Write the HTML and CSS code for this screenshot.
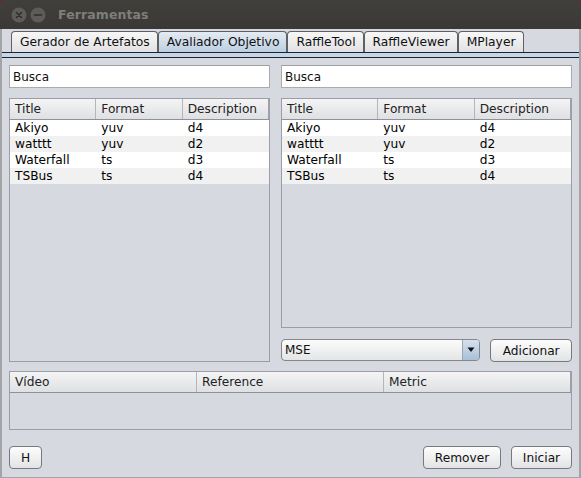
FILE: index.html
```html
<!DOCTYPE html>
<html>
<head>
<meta charset="utf-8">
<link rel="stylesheet" href="styles.css">
</head>
<body>
<div class="window">
  <div class="titlebar">
    <div class="wbtn">
      <svg width="16" height="16" viewBox="0 0 16 16"><circle cx="8" cy="8" r="7.5" fill="#5d5c58"/><path d="M5.5 5.5 L10.5 10.5 M10.5 5.5 L5.5 10.5" stroke="#2f2e2b" stroke-width="1.6" stroke-linecap="round"/></svg>
    </div>
    <div class="wbtn">
      <svg width="16" height="16" viewBox="0 0 16 16"><circle cx="8" cy="8" r="7.5" fill="#5d5c58"/><path d="M4.5 8 L11.5 8" stroke="#2f2e2b" stroke-width="1.6" stroke-linecap="round"/></svg>
    </div>
    <span class="title">Ferramentas</span>
  </div>
  <div class="body">
    <div class="tabs">
      <div class="tab">Gerador de Artefatos</div>
      <div class="tab active">Avaliador Objetivo</div>
      <div class="tab">RaffleTool</div>
      <div class="tab">RaffleViewer</div>
      <div class="tab">MPlayer</div>
    </div>
    <div class="tabline"></div>
    <div class="panel">
      <div class="top">
        <div class="col col-left">
          <div class="field">Busca</div>
          <div class="table grow">
            <div class="thead"><div class="th">Title</div><div class="th">Format</div><div class="th last">Description</div></div>
            <div class="tr"><div class="td">Akiyo</div><div class="td">yuv</div><div class="td">d4</div></div>
            <div class="tr alt"><div class="td">watttt</div><div class="td">yuv</div><div class="td">d2</div></div>
            <div class="tr"><div class="td">Waterfall</div><div class="td">ts</div><div class="td">d3</div></div>
            <div class="tr alt"><div class="td">TSBus</div><div class="td">ts</div><div class="td">d4</div></div>
          </div>
        </div>
        <div class="col col-right">
          <div class="field">Busca</div>
          <div class="table grow">
            <div class="thead"><div class="th">Title</div><div class="th">Format</div><div class="th last">Description</div></div>
            <div class="tr"><div class="td">Akiyo</div><div class="td">yuv</div><div class="td">d4</div></div>
            <div class="tr alt"><div class="td">watttt</div><div class="td">yuv</div><div class="td">d2</div></div>
            <div class="tr"><div class="td">Waterfall</div><div class="td">ts</div><div class="td">d3</div></div>
            <div class="tr alt"><div class="td">TSBus</div><div class="td">ts</div><div class="td">d4</div></div>
          </div>
          <div class="controls">
            <div class="combo">
              <span class="combo-text">MSE</span>
              <span class="combo-arrow"><svg width="8" height="6" viewBox="0 0 8 6"><path d="M0.5 0.5 L7.5 0.5 L4 5 Z" fill="#111"/></svg></span>
            </div>
            <div class="btn btn-add">Adicionar</div>
          </div>
        </div>
      </div>
      <div class="table bottom">
        <div class="thead"><div class="th">Vídeo</div><div class="th">Reference</div><div class="th last">Metric</div></div>
      </div>
      <div class="actions">
        <div class="btn btn-h">H</div>
        <div class="spacer"></div>
        <div class="btn btn-rem">Remover</div>
        <div class="btn btn-ini">Iniciar</div>
      </div>
    </div>
  </div>
</div>
</body>
</html>
```

FILE: styles.css
```css
html, body {
  margin: 0;
  padding: 0;
  background: #5e2750;
}
body {
  font-family: "DejaVu Sans", "Liberation Sans", sans-serif;
  font-size: 12px;
  color: #111;
}
.window {
  width: 581px;
  height: 478px;
  display: flex;
  flex-direction: column;
  overflow: hidden;
  border-radius: 5px 5px 0 0;
}
.titlebar {
  height: 29px;
  flex: none;
  background: linear-gradient(#403f3b, #3a3935);
  display: flex;
  align-items: center;
  padding-left: 11px;
  box-sizing: border-box;
}
.wbtn {
  width: 16px;
  height: 16px;
  margin-right: 3px;
  display: flex;
}
.title {
  margin-left: 9px;
  font-weight: bold;
  font-size: 12.5px;
  color: #7f7e79;
  letter-spacing: 0.1px;
}
.body {
  flex: 1;
  display: flex;
  flex-direction: column;
  background: #d6d9df;
  border-left: 2px solid #a2a4a8;
  border-right: 2px solid #a2a4a8;
  border-bottom: 1px solid #a2a4a8;
}
.tabs {
  display: flex;
  height: 21px;
  margin-top: 2px;
  padding-left: 9px;
}
.tab {
  height: 21px;
  box-sizing: border-box;
  padding: 0 7px 0 8px;
  display: flex;
  align-items: center;
  border: 1px solid #5f6064;
  border-bottom: none;
  border-radius: 4px 4px 0 0;
  background: linear-gradient(#f7f7f7, #e2e2e4);
  color: #111;
  font-size: 12.3px;
}
.tab.active {
  background: linear-gradient(#e4ebf2, #bccfe1);
}
.tabline {
  height: 4px;
  flex: none;
  background: #c5d6e7;
  border-top: 1px solid #1f2330;
  border-bottom: 1px solid #1f2330;
}
.panel {
  flex: 1;
  display: flex;
  flex-direction: column;
  padding: 7px 7px 8px 7px;
}
.top {
  flex: 1;
  display: flex;
  gap: 11px;
}
.col {
  display: flex;
  flex-direction: column;
}
.col-left { width: 261px; }
.col-right { width: 291px; }
.field {
  height: 23px;
  box-sizing: border-box;
  background: #fff;
  border: 1px solid #a9abaf;
  border-top-color: #9c9ea2;
  padding-left: 3px;
  display: flex;
  align-items: center;
  flex: none;
  margin-bottom: 10px;
}
.table {
  border: 1px solid #9b9ea5;
  box-sizing: border-box;
  background: #d6d9df;
}
.grow { flex: 1; }
.thead {
  display: grid;
  grid-template-columns: 1fr 1fr 1fr;
  height: 21px;
  box-sizing: border-box;
  background: linear-gradient(#f4f4f5, #dfe0e3);
  border-bottom: 1px solid #8e9197;
}
.th {
  display: flex;
  align-items: center;
  padding-left: 5px;
  border-right: 1px solid #b3b5ba;
  color: #222;
  font-size: 12.2px;
}
.th.last {
  border-right: 1px solid #9fa1a6;
}
.tr {
  display: grid;
  grid-template-columns: 1fr 1fr 1fr;
  height: 16px;
  background: #fff;
}
.tr.alt { background: #f1f1f2; }
.td {
  padding-left: 5px;
  display: flex;
  align-items: center;
  color: #000;
  font-size: 12.2px;
}
.controls {
  margin-top: 11px;
  height: 23px;
  display: flex;
  gap: 10px;
  flex: none;
}
.combo {
  width: 200px;
  height: 22px;
  box-sizing: border-box;
  border: 1px solid #85878b;
  border-radius: 4px;
  display: flex;
  overflow: hidden;
  background: linear-gradient(#fbfbfb, #e4e5e7);
}
.combo-text {
  flex: 1;
  padding-left: 3px;
  display: flex;
  align-items: center;
}
.combo-arrow {
  width: 16px;
  display: flex;
  align-items: center;
  justify-content: center;
  border-left: 1px solid #9aa6b4;
  background: linear-gradient(#d5e1ed, #a9c0d7);
}
.btn {
  height: 23px;
  box-sizing: border-box;
  border: 1px solid #77797d;
  border-radius: 4px;
  background: linear-gradient(#fdfdfd, #e2e3e5);
  display: flex;
  align-items: center;
  justify-content: center;
  color: #111;
  font-size: 12.2px;
}
.btn-add { width: 82px; }
.bottom {
  margin-top: 9px;
  height: 59px;
  flex: none;
}
.actions {
  margin-top: 16px;
  display: flex;
  height: 23px;
  flex: none;
}
.btn-h { width: 33px; }
.spacer { flex: 1; }
.btn-rem { width: 78px; }
.btn-ini { width: 61px; margin-left: 10px; }
```
